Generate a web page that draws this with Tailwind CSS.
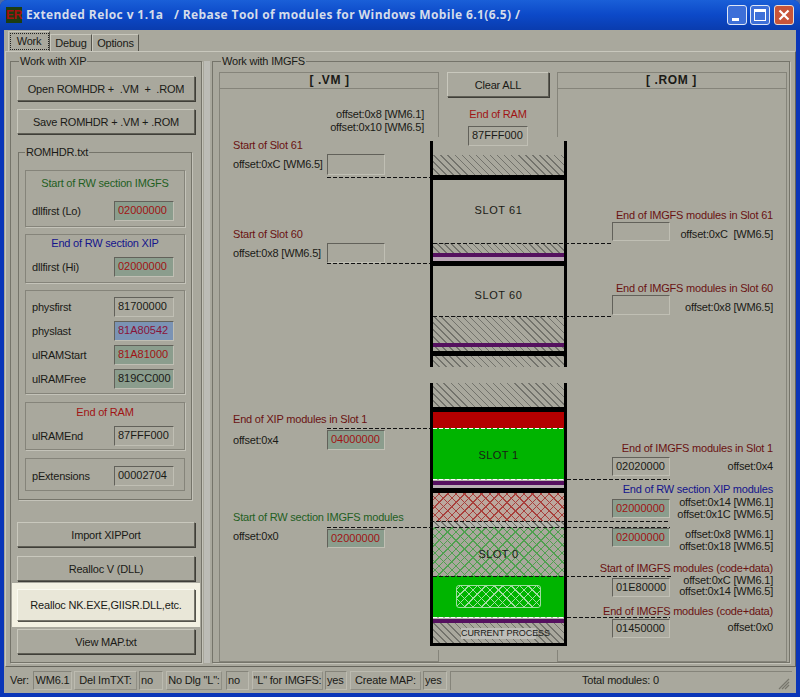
<!DOCTYPE html>
<html>
<head>
<meta charset="utf-8">
<script src="https://cdn.jsdelivr.net/npm/@tailwindcss/browser@4"></script>
<title>Extended Reloc</title>
</head>
<body class="m-0 bg-[#4a6aa8]">
<div class="w-[800px] h-[697px] overflow-hidden flex flex-col rounded-t-[7px] bg-[#0a35b8] font-['Liberation_Sans',sans-serif] text-[11px] tracking-[-0.2px] leading-[14px] text-[#1a1a16]">
  <!-- title bar -->
  <div class="h-[30px] shrink-0 flex items-center pl-[6px] pr-[6px] bg-gradient-to-b from-[#1a5fd8] via-[#0c49c8] to-[#0a3cae]">
    <div class="w-[16px] h-[16px] bg-[#1c3d12] text-[#a81010] text-[12px] font-bold leading-[16px] text-center">ER</div>
    <div class="ml-[4px] flex-1 text-[12px] font-bold text-[#d4dcea] tracking-[0.4px] whitespace-pre font-['Open_Sans',sans-serif]">Extended Reloc v 1.1a   / Rebase Tool of modules for Windows Mobile 6.1(6.5) /</div>
    <div class="flex gap-[3px]">
      <div class="w-[20px] h-[20px] rounded-[3px] border border-[#dfe6f5] bg-[#3d6fd8] flex items-end pl-[4px] pb-[3px]"><div class="w-[7px] h-[3px] bg-white"></div></div>
      <div class="w-[20px] h-[20px] rounded-[3px] border border-[#dfe6f5] bg-[#3d6fd8] flex items-center justify-center"><div class="w-[12px] h-[12px] border border-t-[3px] border-white"></div></div>
      <div class="w-[20px] h-[20px] rounded-[3px] border border-[#e8dcd4] bg-[#c8553a] flex items-center justify-center ml-[1px]">
        <svg width="12" height="12" viewBox="0 0 12 12"><path d="M1.5 1.5L10.5 10.5M10.5 1.5L1.5 10.5" stroke="#fff" stroke-width="2.2" fill="none"/></svg>
      </div>
    </div>
  </div>
  <!-- client -->
  <div class="flex-1 mx-[4px] mb-[4px] bg-[#a9a89d] flex flex-col min-h-0">
    <!-- tabs -->
    <div class="h-[21px] shrink-0 flex items-end pl-[4px]">
      <div class="w-[42px] h-[20px] border-t border-l border-[#c9c8bd] border-r border-r-[#55544c] flex items-center justify-center"><span class="w-[39px] h-[17px] border border-dotted border-[#222] text-center leading-[15px]">Work</span></div>
      <div class="w-[42px] h-[17px] border-t border-l border-[#c9c8bd] border-r border-r-[#55544c] text-center leading-[16px]">Debug</div>
      <div class="w-[47px] h-[17px] border-t border-l border-[#c9c8bd] border-r border-r-[#55544c] text-center leading-[16px]">Options</div>
    </div>
    <!-- tab page -->
    <div class="h-[616px] shrink-0 ml-[1px] mr-[-1px] w-[791px] border border-t-[#c9c8bd] border-l-[#c9c8bd] border-r-[#66655c] border-b-[#66655c] flex pl-[4px] pt-[9px]">
      <!-- left group -->
      <div class="relative w-[192px] h-[602px] border border-[#75746a] shadow-[1px_1px_0_#c4c3b9] flex flex-col px-[6px] pt-[14px]">
        <span class="absolute top-[-8px] left-[8px] bg-[#a9a89d] px-[1px]">Work with XIP</span>
        <div class="h-[25px] shrink-0 flex items-center justify-center whitespace-pre border border-t-[#c9c8bd] border-l-[#c9c8bd] border-r-[#5f5e55] border-b-[#5f5e55] shadow-[1px_1px_0_#3f3e38]">Open ROMHDR +  .VM  +  .ROM</div>
        <div class="mt-[8px] h-[25px] shrink-0 flex items-center justify-center border border-t-[#c9c8bd] border-l-[#c9c8bd] border-r-[#5f5e55] border-b-[#5f5e55] shadow-[1px_1px_0_#3f3e38]">Save ROMHDR + .VM + .ROM</div>
        <!-- ROMHDR -->
        <div class="relative mt-[18px] ml-[1px] w-[174px] h-[348px] shrink-0 border border-[#75746a] shadow-[1px_1px_0_#c4c3b9] px-[6px] pt-[17px] flex flex-col">
          <span class="absolute top-[-8px] left-[6px] bg-[#a9a89d] px-[1px]">ROMHDR.txt</span>
          <div class="h-[57px] shrink-0 border border-[#85847a] shadow-[1px_1px_0_#c4c3b9] pt-[5px] flex flex-col">
            <div class="text-center text-[#1f5f1f]">Start of RW section IMGFS</div>
            <div class="mt-[11px] flex items-center justify-between pl-[6px] pr-[10px]"><span>dllfirst (Lo)</span><div class="w-[60px] h-[20px] pl-[3px] leading-[17px] tracking-normal border border-t-[#62615a] border-l-[#62615a] border-b-[#c0bfb4] border-r-[#c0bfb4] bg-[#8b9d8d] text-[#a01414]">02000000</div></div>
          </div>
          <div class="mt-[7px] h-[49px] shrink-0 border border-[#85847a] shadow-[1px_1px_0_#c4c3b9] pt-[1px] flex flex-col">
            <div class="text-center text-[#14148c]">End of RW section XIP</div>
            <div class="mt-[7px] flex items-center justify-between pl-[6px] pr-[10px]"><span>dllfirst (Hi)</span><div class="w-[60px] h-[20px] pl-[3px] leading-[17px] tracking-normal border border-t-[#62615a] border-l-[#62615a] border-b-[#c0bfb4] border-r-[#c0bfb4] bg-[#8b9d8d] text-[#a01414]">02000000</div></div>
          </div>
          <div class="mt-[7px] h-[104px] shrink-0 border border-[#85847a] shadow-[1px_1px_0_#c4c3b9] pt-[6px] flex flex-col gap-[4px]">
            <div class="flex items-center justify-between pl-[6px] pr-[10px]"><span>physfirst</span><div class="w-[60px] h-[20px] pl-[3px] leading-[17px] tracking-normal border border-t-[#62615a] border-l-[#62615a] border-b-[#c0bfb4] border-r-[#c0bfb4] bg-[#abaa9f]">81700000</div></div>
            <div class="flex items-center justify-between pl-[6px] pr-[10px]"><span>physlast</span><div class="w-[60px] h-[20px] pl-[3px] leading-[17px] tracking-normal border border-t-[#62615a] border-l-[#62615a] border-b-[#c0bfb4] border-r-[#c0bfb4] bg-[#7b93b4] text-[#8a1438]">81A80542</div></div>
            <div class="flex items-center justify-between pl-[6px] pr-[10px]"><span>ulRAMStart</span><div class="w-[60px] h-[20px] pl-[3px] leading-[17px] tracking-normal border border-t-[#62615a] border-l-[#62615a] border-b-[#c0bfb4] border-r-[#c0bfb4] bg-[#8b9d8d] text-[#a01414]">81A81000</div></div>
            <div class="flex items-center justify-between pl-[6px] pr-[10px]"><span>ulRAMFree</span><div class="w-[60px] h-[20px] pl-[3px] leading-[17px] tracking-normal border border-t-[#62615a] border-l-[#62615a] border-b-[#c0bfb4] border-r-[#c0bfb4] bg-[#8b9d8d]">819CC000</div></div>
          </div>
          <div class="mt-[8px] h-[48px] shrink-0 border border-[#85847a] shadow-[1px_1px_0_#c4c3b9] pt-[2px] flex flex-col">
            <div class="text-center text-[#a01414]">End of RAM</div>
            <div class="mt-[7px] flex items-center justify-between pl-[6px] pr-[10px]"><span>ulRAMEnd</span><div class="w-[60px] h-[20px] pl-[3px] leading-[17px] tracking-normal border border-t-[#62615a] border-l-[#62615a] border-b-[#c0bfb4] border-r-[#c0bfb4] bg-[#abaa9f]">87FFF000</div></div>
          </div>
          <div class="mt-[8px] h-[33px] shrink-0 border-t border-x border-b border-[#85847a] pt-[7px]">
            <div class="flex items-center justify-between pl-[6px] pr-[10px]"><span>pExtensions</span><div class="w-[60px] h-[20px] pl-[3px] leading-[17px] tracking-normal border border-t-[#62615a] border-l-[#62615a] border-b-[#c0bfb4] border-r-[#c0bfb4] bg-[#abaa9f]">00002704</div></div>
          </div>
        </div>
        <div class="mt-[22px] h-[25px] shrink-0 flex items-center justify-center border border-t-[#c9c8bd] border-l-[#c9c8bd] border-r-[#5f5e55] border-b-[#5f5e55] shadow-[1px_1px_0_#3f3e38]">Import XIPPort</div>
        <div class="mt-[9px] h-[25px] shrink-0 flex items-center justify-center border border-t-[#c9c8bd] border-l-[#c9c8bd] border-r-[#5f5e55] border-b-[#5f5e55] shadow-[1px_1px_0_#3f3e38]">Realloc V (DLL)</div>
        <div class="mt-[2px] mx-[-5px] h-[44px] shrink-0 bg-[#f3f1e2] px-[5px] pt-[6px]">
          <div class="h-[32px] flex items-center justify-center bg-[#e9e7d8] border border-t-[#fbfaf0] border-l-[#fbfaf0] border-r-[#77766c] border-b-[#77766c] shadow-[1px_1px_0_#55544c]">Realloc NK.EXE,GIISR.DLL,etc.</div>
        </div>
        <div class="mt-[2px] h-[25px] shrink-0 flex items-center justify-center border border-t-[#c9c8bd] border-l-[#c9c8bd] border-r-[#5f5e55] border-b-[#5f5e55] shadow-[1px_1px_0_#3f3e38]">View MAP.txt</div>
      </div>
      <!-- splitter -->
      <div class="w-[6px] h-[602px] ml-[2px] bg-[#bcbcb6]"></div>
      <!-- right group -->
      <div class="relative ml-[2px] w-[578px] h-[602px] border border-[#75746a] shadow-[1px_1px_0_#c4c3b9]">
        <span class="absolute top-[-8px] left-[8px] bg-[#a9a89d] px-[1px]">Work with IMGFS</span>

        <!-- VM panel -->
        <div class="absolute left-[6px] top-[10px] w-[220px] h-[590px] border-l border-t border-b border-[#85847a]">
          <div class="h-[16px] border-b border-[#85847a] text-center font-bold text-[12px] leading-[14px] tracking-[0.6px]">[ .VM ]</div>
        </div>
        <div class="absolute left-[225px] top-[10px] h-[65px] w-px bg-[#85847a]"></div>
        <div class="absolute left-[225px] top-[588px] h-[12px] w-px bg-[#85847a]"></div>
        <!-- ROM panel -->
        <div class="absolute left-[344px] top-[10px] w-[230px] h-[590px] border-r border-t border-b border-[#85847a]">
          <div class="h-[16px] border-b border-[#85847a] text-center font-bold text-[12px] leading-[14px] tracking-[0.6px]">[ .ROM ]</div>
        </div>
        <div class="absolute left-[344px] top-[10px] h-[65px] w-px bg-[#85847a]"></div>
        <div class="absolute left-[344px] top-[588px] h-[12px] w-px bg-[#85847a]"></div>

        <!-- centre -->
        <div class="absolute left-[234px] top-[10px] w-[102px] h-[25px] flex items-center justify-center border border-t-[#c9c8bd] border-l-[#c9c8bd] border-r-[#5f5e55] border-b-[#5f5e55] shadow-[1px_1px_0_#3f3e38]">Clear ALL</div>
        <div class="absolute left-[234px] top-[45px] w-[102px] text-center text-[#a01414]">End of RAM</div>
        <div class="absolute left-[255px] top-[64px] w-[60px] h-[20px] pl-[3px] leading-[17px] tracking-normal border border-t-[#62615a] border-l-[#62615a] border-b-[#c0bfb4] border-r-[#c0bfb4] bg-[#abaa9f]">87FFF000</div>

        <!-- memory map, upper -->
        <div class="absolute left-[217px] top-[79px] w-[137px] h-[226px] border-x-[3px] border-black flex flex-col">
          <div class="h-[14px] shrink-0"></div>
          <div class="h-[20px] shrink-0 bg-[image:repeating-linear-gradient(45deg,transparent_0,transparent_4px,#73736c_4px,#73736c_5px)]"></div>
          <div class="h-[5px] shrink-0 bg-black"></div>
          <div class="h-[63px] shrink-0 flex items-center justify-center pb-[3px] tracking-[0.6px]">SLOT 61</div>
          <div class="h-[10px] shrink-0 bg-[image:repeating-linear-gradient(45deg,transparent_0,transparent_4px,#73736c_4px,#73736c_5px)]"></div>
          <div class="h-[4px] shrink-0 bg-[#55105f]"></div>
          <div class="h-[4px] shrink-0 bg-[#b9a5b5]"></div>
          <div class="h-[5px] shrink-0 bg-black"></div>
          <div class="h-[50px] shrink-0 flex items-center justify-center pt-[8px] tracking-[0.6px]">SLOT 60</div>
          <div class="h-[27px] shrink-0 bg-[image:repeating-linear-gradient(45deg,transparent_0,transparent_4px,#73736c_4px,#73736c_5px)]"></div>
          <div class="h-[4px] shrink-0 bg-[#55105f]"></div>
          <div class="h-[4px] shrink-0 bg-[image:repeating-linear-gradient(45deg,transparent_0,transparent_4px,#73736c_4px,#73736c_5px)]"></div>
          <div class="h-[5px] shrink-0 bg-black"></div>
          <div class="h-[11px] shrink-0 bg-[image:repeating-linear-gradient(45deg,transparent_0,transparent_4px,#73736c_4px,#73736c_5px)]"></div>
        </div>
        <!-- memory map, lower -->
        <div class="absolute left-[217px] top-[321px] w-[137px] h-[263px] border-x-[3px] border-b-[3px] border-black flex flex-col">
          <div class="h-[24px] shrink-0 bg-[image:repeating-linear-gradient(45deg,transparent_0,transparent_4px,#73736c_4px,#73736c_5px)]"></div>
          <div class="h-[5px] shrink-0 bg-black"></div>
          <div class="h-[16px] shrink-0 bg-[#b40000]"></div>
          <div class="h-[51px] shrink-0 bg-[#00b400] flex items-center justify-center pt-[3px] tracking-[0.4px]">SLOT 1</div>
          <div class="h-[2px] shrink-0 bg-[#b4b4ac]"></div>
          <div class="h-[4px] shrink-0 bg-[#55105f]"></div>
          <div class="h-[3px] shrink-0 bg-[#b9b0b5]"></div>
          <div class="h-[5px] shrink-0 bg-black"></div>
          <div class="h-[28px] shrink-0 bg-[#bca89e] bg-[image:repeating-linear-gradient(45deg,transparent_0,transparent_5px,#a8403c_5px,#a8403c_6px),repeating-linear-gradient(-45deg,transparent_0,transparent_5px,#a8403c_5px,#a8403c_6px)]"></div>
          <div class="h-[6px] shrink-0 bg-[#b4b4ac] bg-[image:repeating-linear-gradient(45deg,transparent_0,transparent_4px,#73736c_4px,#73736c_5px)]"></div>
          <div class="h-[49px] shrink-0 bg-[image:repeating-linear-gradient(45deg,transparent_0,transparent_5px,#4fa04f_5px,#4fa04f_6px),repeating-linear-gradient(-45deg,transparent_0,transparent_5px,#4fa04f_5px,#4fa04f_6px)] flex items-center justify-center pt-[4px]">
            <span class="tracking-[0.4px]">SLOT 0</span>
          </div>
          <div class="h-[41px] shrink-0 bg-[#00b400] flex items-center justify-center">
            <div class="w-[85px] h-[23px] rounded-[3px] border border-[#9fdc9f] bg-[image:repeating-linear-gradient(45deg,transparent_0,transparent_5px,#a3dea3_5px,#a3dea3_6px),repeating-linear-gradient(-45deg,transparent_0,transparent_5px,#a3dea3_5px,#a3dea3_6px)]"></div>
          </div>
          <div class="h-[2px] shrink-0 bg-[#b4b4ac]"></div>
          <div class="h-[4px] shrink-0 bg-[#55105f]"></div>
          <div class="h-[20px] shrink-0 flex items-center justify-center bg-[image:repeating-linear-gradient(45deg,transparent_0,transparent_4px,#73736c_4px,#73736c_5px)]">
            <span class="h-[11px] w-[75px] bg-[#bdbdb8] text-[9px] leading-[11px] text-center tracking-[-0.1px] whitespace-nowrap">CURRENT PROCESS</span>
          </div>
        </div>

        <!-- dashed leaders -->
        <div class="absolute left-[114px] top-[115px] w-[103px] h-px bg-[image:repeating-linear-gradient(90deg,#111_0,#111_4px,transparent_4px,transparent_6px)]"></div>
        <div class="absolute left-[114px] top-[201px] w-[103px] h-px bg-[image:repeating-linear-gradient(90deg,#111_0,#111_4px,transparent_4px,transparent_6px)]"></div>
        <div class="absolute left-[220px] top-[181px] w-[179px] h-px bg-[image:repeating-linear-gradient(90deg,#111_0,#111_4px,transparent_4px,transparent_6px)]"></div>
        <div class="absolute left-[220px] top-[254px] w-[179px] h-px bg-[image:repeating-linear-gradient(90deg,#111_0,#111_4px,transparent_4px,transparent_6px)]"></div>
        <div class="absolute left-[114px] top-[366px] w-[103px] h-px bg-[image:repeating-linear-gradient(90deg,#111_0,#111_4px,transparent_4px,transparent_6px)]"></div>
        <div class="absolute left-[220px] top-[366px] w-[131px] h-px bg-[image:repeating-linear-gradient(90deg,#fff_0,#fff_4px,transparent_4px,transparent_6px)]"></div>
        <div class="absolute left-[220px] top-[417px] w-[131px] h-px bg-[image:repeating-linear-gradient(90deg,#fff_0,#fff_4px,transparent_4px,transparent_6px)]"></div>
        <div class="absolute left-[354px] top-[417px] w-[103px] h-px bg-[image:repeating-linear-gradient(90deg,#111_0,#111_4px,transparent_4px,transparent_6px)]"></div>
        <div class="absolute left-[217px] top-[459px] w-[240px] h-px bg-[image:repeating-linear-gradient(90deg,#111_0,#111_4px,transparent_4px,transparent_6px)]"></div>
        <div class="absolute left-[114px] top-[465px] w-[343px] h-px bg-[image:repeating-linear-gradient(90deg,#111_0,#111_4px,transparent_4px,transparent_6px)]"></div>
        <div class="absolute left-[220px] top-[514px] w-[239px] h-px bg-[image:repeating-linear-gradient(90deg,#111_0,#111_4px,transparent_4px,transparent_6px)]"></div>
        <div class="absolute left-[220px] top-[555px] w-[131px] h-px bg-[image:repeating-linear-gradient(90deg,#fff_0,#fff_4px,transparent_4px,transparent_6px)]"></div>
        <div class="absolute left-[354px] top-[555px] w-[103px] h-px bg-[image:repeating-linear-gradient(90deg,#111_0,#111_4px,transparent_4px,transparent_6px)]"></div>

        <!-- left labels -->
        <div class="absolute right-[365px] top-[46px] text-right leading-[13px]">offset:0x8 [WM6.1]<br>offset:0x10 [WM6.5]</div>
        <div class="absolute left-[20px] top-[76px] text-[#6a1212]">Start of Slot 61</div>
        <div class="absolute left-[20px] top-[95px]">offset:0xC [WM6.5]</div>
        <div class="absolute left-[114px] top-[92px] w-[58px] h-[21px] border border-t-[#62615a] border-l-[#62615a] border-b-[#c0bfb4] border-r-[#c0bfb4]"></div>
        <div class="absolute left-[20px] top-[165px] text-[#6a1212]">Start of Slot 60</div>
        <div class="absolute left-[20px] top-[184px]">offset:0x8 [WM6.5]</div>
        <div class="absolute left-[114px] top-[181px] w-[58px] h-[20px] border border-t-[#62615a] border-l-[#62615a] border-b-[#c0bfb4] border-r-[#c0bfb4]"></div>
        <div class="absolute left-[20px] top-[350px] text-[#6a1212]">End of XIP modules in Slot 1</div>
        <div class="absolute left-[20px] top-[371px]">offset:0x4</div>
        <div class="absolute left-[114px] top-[368px] w-[58px] h-[20px] pl-[3px] leading-[17px] tracking-normal border border-t-[#62615a] border-l-[#62615a] border-b-[#c0bfb4] border-r-[#c0bfb4] bg-[#8b9d8d] text-[#a01414]">04000000</div>
        <div class="absolute left-[20px] top-[448px] text-[#1f5f1f]">Start of RW section IMGFS modules</div>
        <div class="absolute left-[20px] top-[467px]">offset:0x0</div>
        <div class="absolute left-[114px] top-[467px] w-[58px] h-[19px] pl-[3px] leading-[16px] tracking-normal border border-t-[#62615a] border-l-[#62615a] border-b-[#c0bfb4] border-r-[#c0bfb4] bg-[#8b9d8d] text-[#a01414]">02000000</div>

        <!-- right labels -->
        <div class="absolute right-[16px] top-[146px] text-[#6a1212]">End of IMGFS modules in Slot 61</div>
        <div class="absolute left-[399px] top-[160px] w-[58px] h-[19px] border border-t-[#62615a] border-l-[#62615a] border-b-[#c0bfb4] border-r-[#c0bfb4]"></div>
        <div class="absolute right-[16px] top-[165px] whitespace-pre">offset:0xC  [WM6.5]</div>
        <div class="absolute right-[16px] top-[219px] text-[#6a1212]">End of IMGFS modules in Slot 60</div>
        <div class="absolute left-[399px] top-[233px] w-[58px] h-[20px] border border-t-[#62615a] border-l-[#62615a] border-b-[#c0bfb4] border-r-[#c0bfb4]"></div>
        <div class="absolute right-[16px] top-[238px]">offset:0x8 [WM6.5]</div>
        <div class="absolute right-[16px] top-[379px] text-[#6a1212]">End of IMGFS modules in Slot 1</div>
        <div class="absolute left-[399px] top-[395px] w-[58px] h-[19px] pl-[3px] leading-[16px] tracking-normal border border-t-[#62615a] border-l-[#62615a] border-b-[#c0bfb4] border-r-[#c0bfb4] bg-[#abaa9f]">02020000</div>
        <div class="absolute right-[16px] top-[397px]">offset:0x4</div>
        <div class="absolute right-[16px] top-[420px] text-[#14148c]">End of RW section XIP modules</div>
        <div class="absolute left-[399px] top-[437px] w-[58px] h-[19px] pl-[3px] leading-[16px] tracking-normal border border-t-[#62615a] border-l-[#62615a] border-b-[#c0bfb4] border-r-[#c0bfb4] bg-[#8b9d8d] text-[#a01414]">02000000</div>
        <div class="absolute right-[16px] top-[434px] text-right leading-[12px]">offset:0x14 [WM6.1]<br>offset:0x1C [WM6.5]</div>
        <div class="absolute left-[399px] top-[466px] w-[58px] h-[19px] pl-[3px] leading-[16px] tracking-normal border border-t-[#62615a] border-l-[#62615a] border-b-[#c0bfb4] border-r-[#c0bfb4] bg-[#8b9d8d] text-[#a01414]">02000000</div>
        <div class="absolute right-[16px] top-[466px] text-right leading-[12px]">offset:0x8 [WM6.1]<br>offset:0x18 [WM6.5]</div>
        <div class="absolute right-[16px] top-[499px] text-[#6a1212]">Start of IMGFS modules (code+data)</div>
        <div class="absolute left-[399px] top-[516px] w-[58px] h-[19px] pl-[3px] leading-[16px] tracking-normal border border-t-[#62615a] border-l-[#62615a] border-b-[#c0bfb4] border-r-[#c0bfb4] bg-[#abaa9f]">01E80000</div>
        <div class="absolute right-[16px] top-[513px] text-right leading-[11px]">offset:0xC [WM6.1]<br>offset:0x14 [WM6.5]</div>
        <div class="absolute right-[16px] top-[542px] text-[#6a1212]">End of IMGFS modules (code+data)</div>
        <div class="absolute left-[399px] top-[557px] w-[58px] h-[19px] pl-[3px] leading-[16px] tracking-normal border border-t-[#62615a] border-l-[#62615a] border-b-[#c0bfb4] border-r-[#c0bfb4] bg-[#abaa9f]">01450000</div>
        <div class="absolute right-[16px] top-[558px]">offset:0x0</div>
      </div>
    </div>
    <!-- status bar -->
    <div class="flex-1 flex items-start pt-[4px] pl-[3px] whitespace-nowrap">
      <div class="w-[25px] h-[19px] leading-[18px] text-center">Ver:</div>
      <div class="ml-[1px] w-[39px] h-[19px] leading-[17px] text-center border border-t-[#85847a] border-l-[#85847a] border-b-[#bcbbb0] border-r-[#bcbbb0]">WM6.1</div>
      <div class="ml-[2px] w-[63px] h-[19px] leading-[17px] text-center border border-t-[#bcbbb0] border-l-[#bcbbb0] border-b-[#8f8e84] border-r-[#8f8e84]">Del ImTXT:</div>
      <div class="ml-[2px] w-[24px] h-[19px] leading-[17px] pl-[1px] border border-t-[#85847a] border-l-[#85847a] border-b-[#bcbbb0] border-r-[#bcbbb0]">no</div>
      <div class="ml-[3px] w-[56px] h-[19px] leading-[17px] text-center border border-t-[#bcbbb0] border-l-[#bcbbb0] border-b-[#8f8e84] border-r-[#8f8e84]">No Dlg "L":</div>
      <div class="ml-[4px] w-[23px] h-[19px] leading-[17px] pl-[1px] border border-t-[#85847a] border-l-[#85847a] border-b-[#bcbbb0] border-r-[#bcbbb0]">no</div>
      <div class="ml-[3px] w-[71px] h-[19px] leading-[17px] text-center border border-t-[#bcbbb0] border-l-[#bcbbb0] border-b-[#8f8e84] border-r-[#8f8e84]">"L" for IMGFS:</div>
      <div class="ml-[2px] w-[22px] h-[19px] leading-[17px] pl-[1px] border border-t-[#85847a] border-l-[#85847a] border-b-[#bcbbb0] border-r-[#bcbbb0]">yes</div>
      <div class="ml-[3px] w-[71px] h-[19px] leading-[17px] text-center border border-t-[#bcbbb0] border-l-[#bcbbb0] border-b-[#8f8e84] border-r-[#8f8e84]">Create MAP:</div>
      <div class="ml-[2px] w-[24px] h-[19px] leading-[17px] pl-[1px] border border-t-[#85847a] border-l-[#85847a] border-b-[#bcbbb0] border-r-[#bcbbb0]">yes</div>
      <div class="relative ml-[3px] w-[342px] h-[19px] leading-[17px] text-center pr-[2px] border-l border-t border-[#85847a]">Total modules: 0
        <svg class="absolute right-[2px] bottom-0" width="12" height="12" viewBox="0 0 12 12"><path d="M11 1L1 11M11 4L4 11M11 7L7 11" stroke="#77766c" stroke-width="1.2" fill="none"/></svg>
      </div>
    </div>
  </div>
</div>
</body>
</html>
